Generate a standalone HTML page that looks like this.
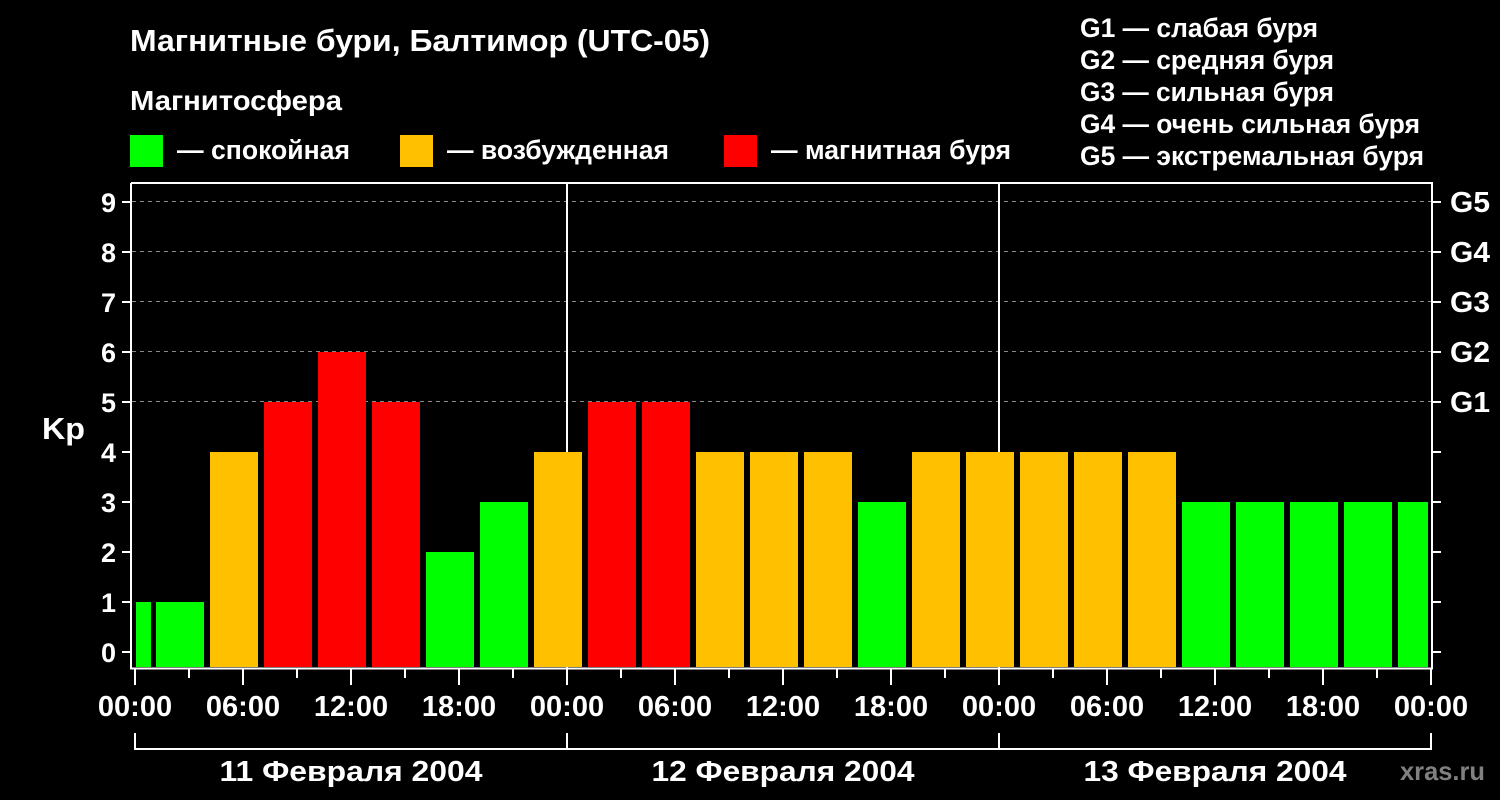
<!DOCTYPE html><html><head><meta charset="utf-8"><style>body{margin:0;background:#000}svg{display:block}text{font-family:"Liberation Sans",Arial,sans-serif;font-weight:bold;fill:#fff}</style></head><body>
<svg width="1500" height="800" viewBox="0 0 1500 800">
<rect width="1500" height="800" fill="#000"/>
<text x="130" y="51" font-size="31" textLength="580" lengthAdjust="spacingAndGlyphs">Магнитные бури, Балтимор (UTC-05)</text>
<text x="130" y="110" font-size="28" textLength="212" lengthAdjust="spacingAndGlyphs">Магнитосфера</text>
<rect x="130" y="135" width="33" height="32" fill="#00ff00"/><text x="177" y="159" font-size="26.5" textLength="173" lengthAdjust="spacingAndGlyphs">— спокойная</text>
<rect x="400" y="135" width="33" height="32" fill="#ffc000"/><text x="447" y="159" font-size="26.5" textLength="222" lengthAdjust="spacingAndGlyphs">— возбужденная</text>
<rect x="724" y="135" width="33" height="32" fill="#ff0000"/><text x="771" y="159" font-size="26.5" textLength="240" lengthAdjust="spacingAndGlyphs">— магнитная буря</text>
<g font-size="26.5"><text x="1080" y="37" textLength="238" lengthAdjust="spacingAndGlyphs">G1 — слабая буря</text><text x="1080" y="69" textLength="254" lengthAdjust="spacingAndGlyphs">G2 — средняя буря</text><text x="1080" y="101" textLength="254" lengthAdjust="spacingAndGlyphs">G3 — сильная буря</text><text x="1080" y="133" textLength="340" lengthAdjust="spacingAndGlyphs">G4 — очень сильная буря</text><text x="1080" y="165" textLength="344" lengthAdjust="spacingAndGlyphs">G5 — экстремальная буря</text></g>
<g stroke="#888" stroke-dasharray="4,4" stroke-width="1"><line x1="132" x2="1432" y1="201.5" y2="201.5"/><line x1="132" x2="1432" y1="251.5" y2="251.5"/><line x1="132" x2="1432" y1="301.5" y2="301.5"/><line x1="132" x2="1432" y1="351.5" y2="351.5"/><line x1="132" x2="1432" y1="401.5" y2="401.5"/></g>
<g stroke="#fff" stroke-width="2"><line x1="567" x2="567" y1="183" y2="668"/><line x1="999" x2="999" y1="183" y2="668"/></g>
<g>
<rect x="136" y="602" width="15" height="65" fill="#00ff00"/>
<rect x="156" y="602" width="48" height="65" fill="#00ff00"/>
<rect x="210" y="452" width="48" height="215" fill="#ffc000"/>
<rect x="264" y="402" width="48" height="265" fill="#ff0000"/>
<rect x="318" y="352" width="48" height="315" fill="#ff0000"/>
<rect x="372" y="402" width="48" height="265" fill="#ff0000"/>
<rect x="426" y="552" width="48" height="115" fill="#00ff00"/>
<rect x="480" y="502" width="48" height="165" fill="#00ff00"/>
<rect x="534" y="452" width="48" height="215" fill="#ffc000"/>
<rect x="588" y="402" width="48" height="265" fill="#ff0000"/>
<rect x="642" y="402" width="48" height="265" fill="#ff0000"/>
<rect x="696" y="452" width="48" height="215" fill="#ffc000"/>
<rect x="750" y="452" width="48" height="215" fill="#ffc000"/>
<rect x="804" y="452" width="48" height="215" fill="#ffc000"/>
<rect x="858" y="502" width="48" height="165" fill="#00ff00"/>
<rect x="912" y="452" width="48" height="215" fill="#ffc000"/>
<rect x="966" y="452" width="48" height="215" fill="#ffc000"/>
<rect x="1020" y="452" width="48" height="215" fill="#ffc000"/>
<rect x="1074" y="452" width="48" height="215" fill="#ffc000"/>
<rect x="1128" y="452" width="48" height="215" fill="#ffc000"/>
<rect x="1182" y="502" width="48" height="165" fill="#00ff00"/>
<rect x="1236" y="502" width="48" height="165" fill="#00ff00"/>
<rect x="1290" y="502" width="48" height="165" fill="#00ff00"/>
<rect x="1344" y="502" width="48" height="165" fill="#00ff00"/>
<rect x="1398" y="502" width="30" height="165" fill="#00ff00"/>
</g>
<g stroke="#fff" stroke-width="2" fill="none">
<polyline points="131,183 131,668.5 1432,668.5 1432,183 131,183"/>
<path d="M122 652H131M122 602H131M122 552H131M122 502H131M122 452H131M122 402H131M122 352H131M122 302H131M122 252H131M122 202H131"/>
<path d="M1432 652H1441M1432 602H1441M1432 552H1441M1432 502H1441M1432 452H1441M1432 402H1441M1432 352H1441M1432 302H1441M1432 252H1441M1432 202H1441"/>
<path d="M135 669V685M189 669V678M243 669V685M297 669V678M351 669V685M405 669V678M459 669V685M513 669V678M567 669V685M621 669V678M675 669V685M729 669V678M783 669V685M837 669V678M891 669V685M945 669V678M999 669V685M1053 669V678M1107 669V685M1161 669V678M1215 669V685M1269 669V678M1323 669V685M1377 669V678M1431 669V685"/>
<path d="M135 733V749H1431V733M567 733V749M999 733V749"/>
</g>
<g font-size="27" text-anchor="end"><text x="116" y="662">0</text><text x="116" y="612">1</text><text x="116" y="562">2</text><text x="116" y="512">3</text><text x="116" y="462">4</text><text x="116" y="412">5</text><text x="116" y="362">6</text><text x="116" y="312">7</text><text x="116" y="262">8</text><text x="116" y="212">9</text></g>
<text x="42" y="439" font-size="31" textLength="43" lengthAdjust="spacingAndGlyphs">Kp</text>
<g font-size="29"><text x="1450" y="212" textLength="40" lengthAdjust="spacingAndGlyphs">G5</text><text x="1450" y="262" textLength="40" lengthAdjust="spacingAndGlyphs">G4</text><text x="1450" y="312" textLength="40" lengthAdjust="spacingAndGlyphs">G3</text><text x="1450" y="362" textLength="40" lengthAdjust="spacingAndGlyphs">G2</text><text x="1450" y="412" textLength="40" lengthAdjust="spacingAndGlyphs">G1</text></g>
<g font-size="29" text-anchor="middle"><text x="135" y="716">00:00</text><text x="243" y="716">06:00</text><text x="351" y="716">12:00</text><text x="459" y="716">18:00</text><text x="567" y="716">00:00</text><text x="675" y="716">06:00</text><text x="783" y="716">12:00</text><text x="891" y="716">18:00</text><text x="999" y="716">00:00</text><text x="1107" y="716">06:00</text><text x="1215" y="716">12:00</text><text x="1323" y="716">18:00</text><text x="1431" y="716">00:00</text>
<text x="351" y="781" textLength="263" lengthAdjust="spacingAndGlyphs">11 Февраля 2004</text><text x="783" y="781" textLength="263" lengthAdjust="spacingAndGlyphs">12 Февраля 2004</text><text x="1215" y="781" textLength="263" lengthAdjust="spacingAndGlyphs">13 Февраля 2004</text></g>
<text x="1400" y="780" font-size="26" textLength="85" lengthAdjust="spacingAndGlyphs" style="fill:#808080">xras.ru</text>
</svg></body></html>
